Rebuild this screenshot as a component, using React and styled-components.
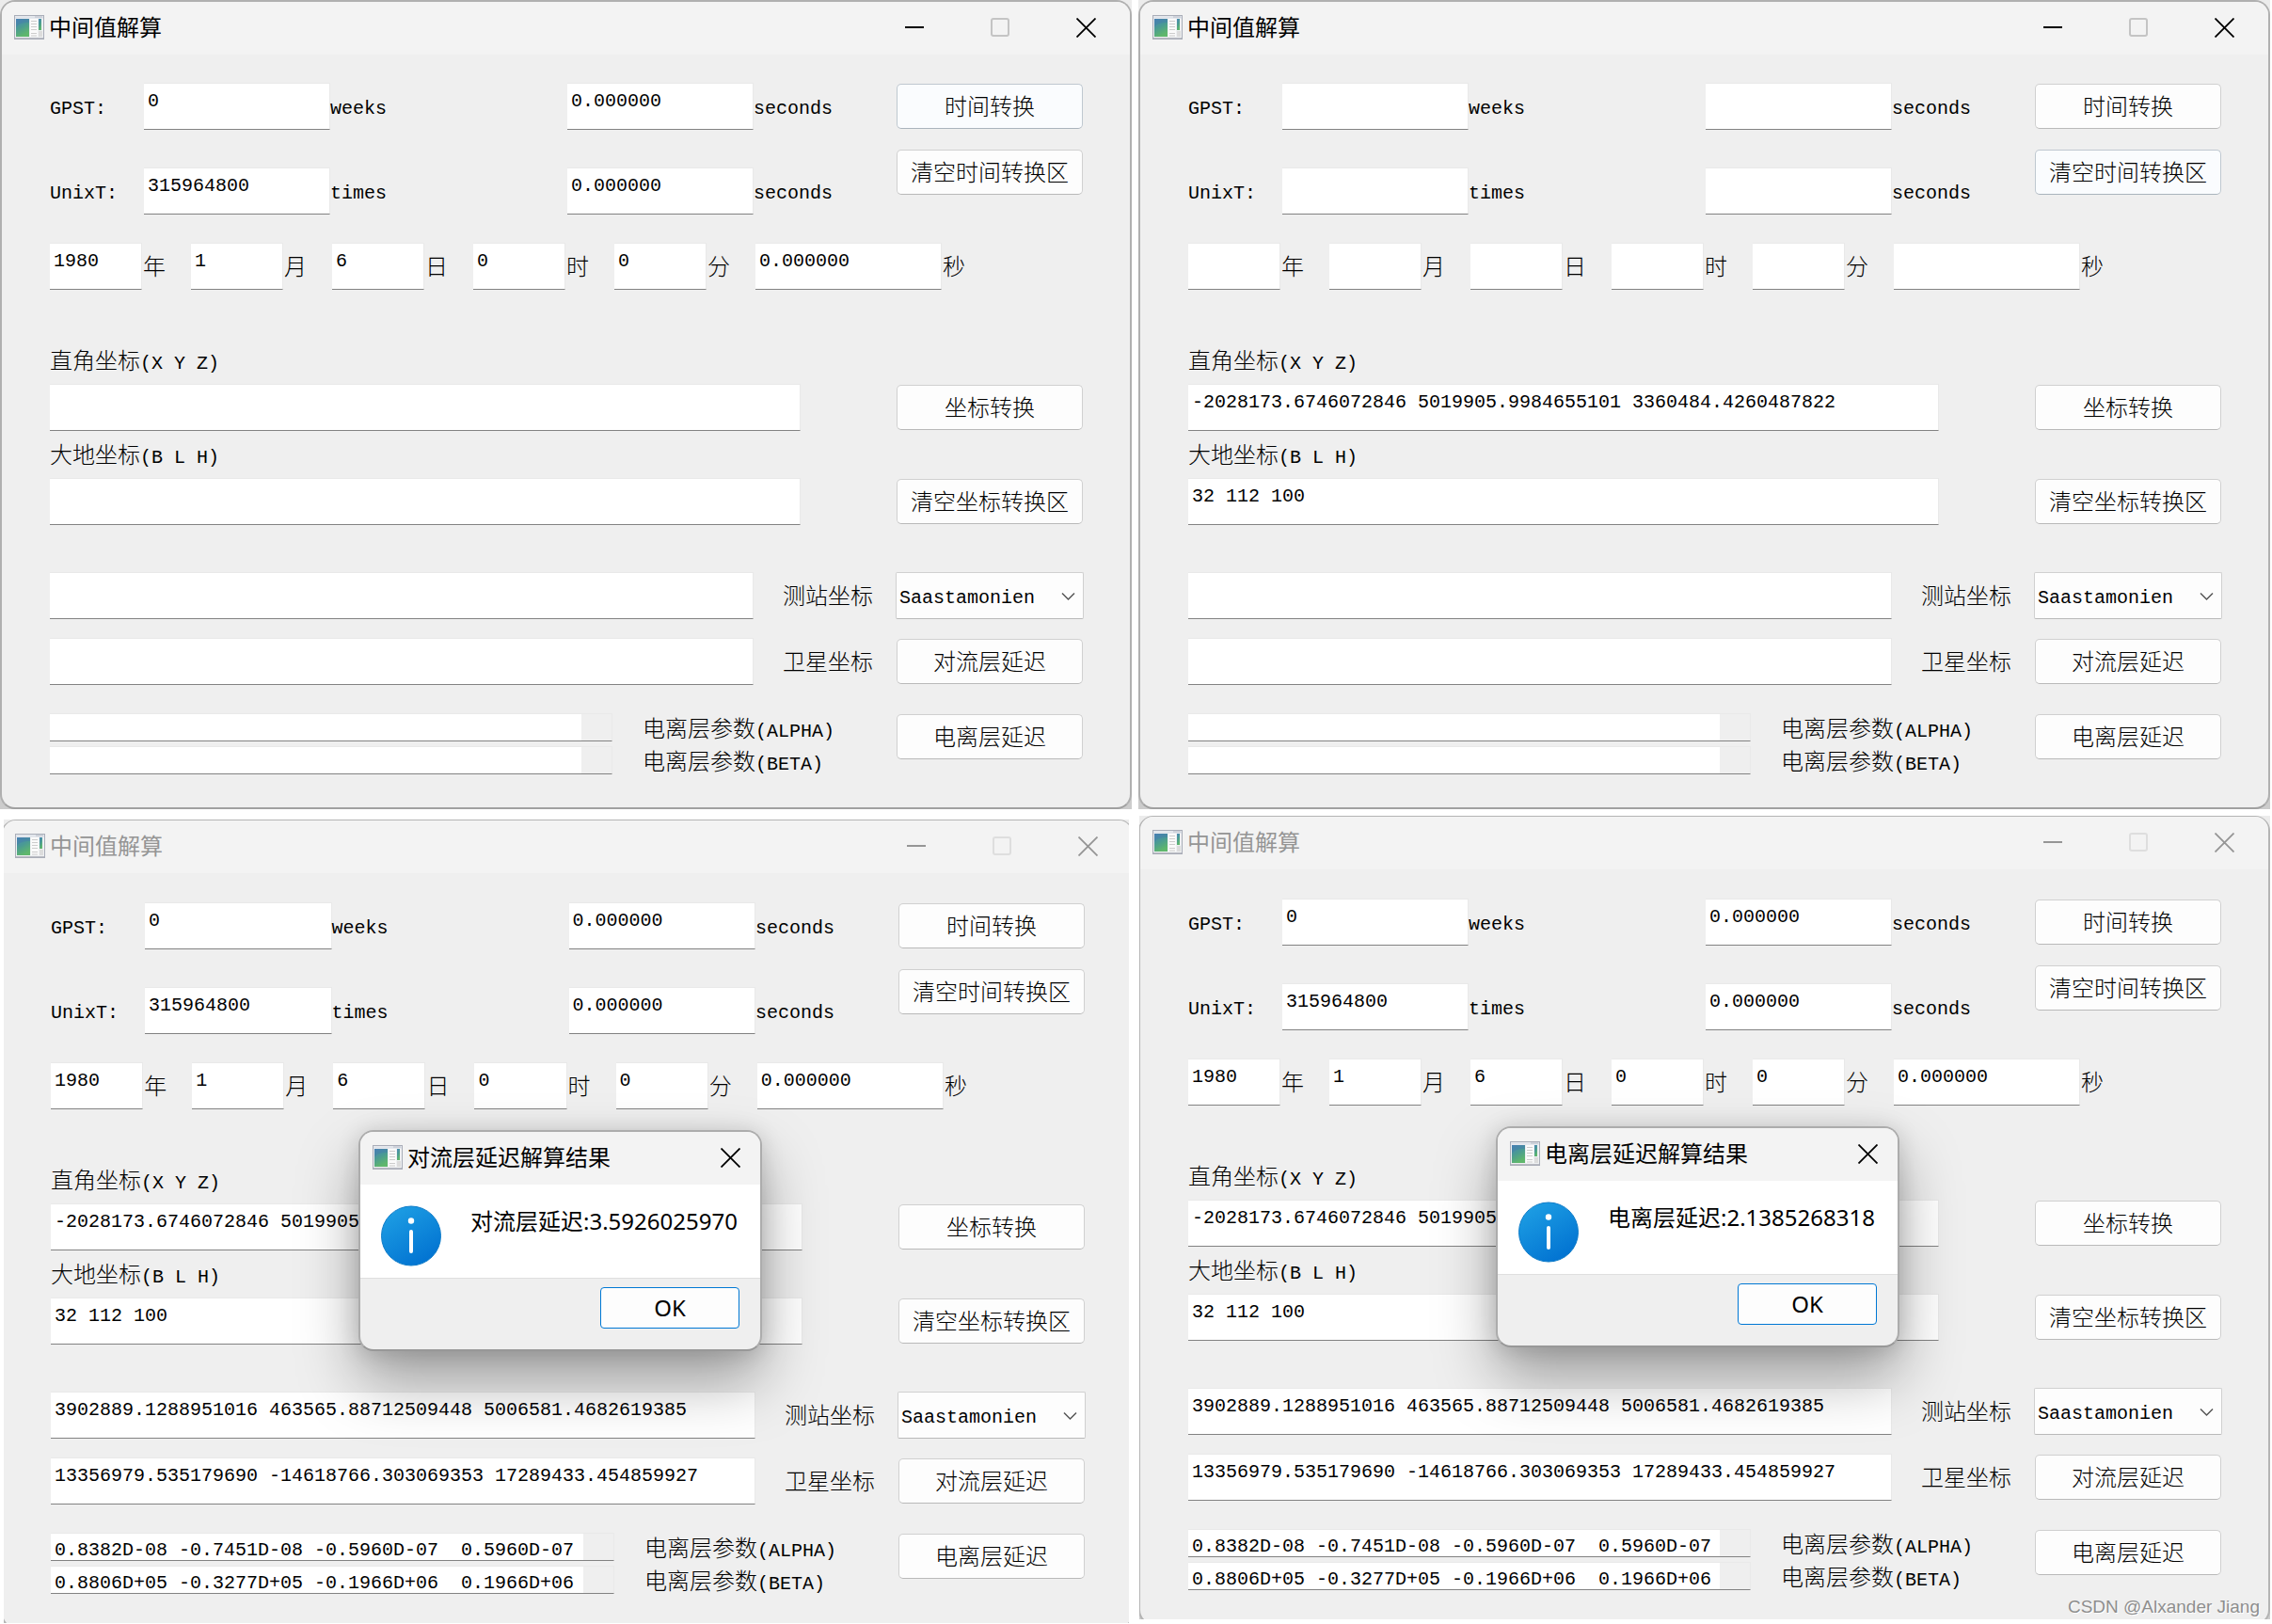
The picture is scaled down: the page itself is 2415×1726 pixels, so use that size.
import React, { useId } from "react";
import styled, { createGlobalStyle, css } from "styled-components";

const GlobalStyle = createGlobalStyle`
	* {
		box-sizing: border-box;
	}
	body {
		margin: 0;
		background: #fff;
		color: #000;
		font-family: "Liberation Mono", "Noto Sans CJK SC", monospace;
		font-size: 20px;
	}
	button, input, select {
		margin: 0;
		font: inherit;
		color: inherit;
	}
`;

const Page = styled.main`
	position: relative;
	display: grid;
	grid-template-columns: 1fr 1fr;
	column-gap: 7px;
	align-items: start;
	padding-right: 2px;
	overflow: hidden;
`;

// the two lower windows are cropped a little at their edges
const Shot = styled.div`
	overflow: hidden;
	background: linear-gradient(#ececec, #cccccc);
	margin: ${({ $margin }) => $margin || "0"};
`;

const Frame = styled.section`
	position: relative;
	margin: ${({ $margin }) => $margin || "0"};
	border: 2px solid #b0b0b0;
	border-bottom-color: #a0a0a0;
	border-radius: 16px;
	background: #efefef;
	${({ $inactive }) =>
		$inactive &&
		css`
			border-top-width: 1px;
			border-color: #b4b4b4;
		`}
`;

const TitleBar = styled.header`
	display: flex;
	align-items: center;
	height: 56px;
	padding: 0 36px 2px 13px;
	background: #f3f3f3;
	border-radius: 14px 14px 0 0;
	color: ${({ $inactive }) => ($inactive ? "#959595" : "#000")};
`;

const Title = styled.h1`
	flex: 1;
	margin: 0 0 0 5px;
	padding-bottom: 2px;
	font-family: "Noto Sans CJK SC", sans-serif;
	font-size: 24px;
	font-weight: 400;
	line-height: 30px;
`;

const CaptionButtons = styled.div`
	display: flex;
	gap: 70px;
`;

const CaptionButton = styled.button`
	display: flex;
	padding: 0;
	border: 0;
	background: none;
	color: ${({ $inactive }) => ($inactive ? "#959595" : "#000")};
	&:disabled {
		color: ${({ $inactive }) => ($inactive ? "#dedede" : "#c4c4c4")};
	}
`;

const Body = styled.form`
	padding: ${({ $inactive }) => ($inactive ? "31px" : "30px")} 50px 35px 51px;
`;

const TimeSection = styled.div`
	display: grid;
	grid-template-columns: 1fr 198px;
`;

const TimeRows = styled.div`
	display: grid;
	grid-template-columns: 100px 1fr 252px 1fr 152px;
	row-gap: 40px;
`;

const ButtonStack = styled.div`
	display: flex;
	flex-direction: column;
	gap: 22px;
	padding-top: 1px;
`;

const DateRow = styled.div`
	display: grid;
	grid-template-columns: repeat(5, 98fr 52px) 198fr 150px;
	margin-top: 30px;
`;

const CoordSection = styled.div`
	margin-top: 50px;
`;

const CoordRow = styled.div`
	display: grid;
	grid-template-columns: 1fr 198px;
	column-gap: 102px;
	align-items: center;
`;

const DelaySection = styled.div`
	display: grid;
	gap: 20px;
	margin-top: 50px;
`;

const DelayRow = styled.div`
	display: grid;
	grid-template-columns: 1fr 152px 198px;
	align-items: center;
`;

const IonoRow = styled.div`
	display: grid;
	grid-template-columns: 1fr 302px 198px;
	align-items: start;
	margin-top: 10px;
`;

const IonoStack = styled.div`
	display: grid;
	gap: 5px;
`;

const Latin = styled.label`
	height: 50px;
	padding-top: 6px;
	line-height: 44px;
	white-space: pre;
`;

const Caption = styled.label`
	display: block;
	height: ${({ $slim }) => ($slim ? 30 : 50)}px;
	padding-left: ${({ $indent }) => $indent || 0}px;
	font-family: "Noto Sans CJK SC", sans-serif;
	font-size: 24px;
	font-weight: 300;
	line-height: ${({ $slim }) => ($slim ? 30 : 48)}px;
	white-space: nowrap;
	span {
		font-family: "Liberation Mono", monospace;
		font-size: 20px;
		line-height: 20px;
	}
`;

const Field = styled.input`
	width: 100%;
	min-width: 0;
	height: 50px;
	padding: 0 0 12px 4px;
	border: 1px solid #e9e9e9;
	border-left-width: 0;
	border-bottom-color: #828282;
	border-radius: 0;
	background: #fff;
	outline: none;
`;

const SlimField = styled(Field)`
	height: 30px;
	padding: 6px 32px 0 4px;
	background: linear-gradient(to left, #efefef 32px, #fff 32px);
`;

const PushButton = styled.button`
	width: 100%;
	height: 48px;
	padding: 0 0 2px;
	border: 1px solid ${({ $hot }) => ($hot ? "#bfc8d0" : "#d0d0d0")};
	border-bottom-color: ${({ $hot }) => ($hot ? "#aab4bd" : "#b9b9b9")};
	border-radius: 5px;
	background: ${({ $hot }) => ($hot ? "#fafcfe" : "#fdfdfd")};
	font-family: "Noto Sans CJK SC", sans-serif;
	font-size: 24px;
	font-weight: 300;
	line-height: 44px;
	white-space: nowrap;
`;

const IonoButton = styled(PushButton)`
	margin-top: 1px;
`;

const Combo = styled.div`
	position: relative;
	margin: 0 -1px;
	svg {
		position: absolute;
		right: 9px;
		top: 21px;
		pointer-events: none;
	}
`;

const Select = styled.select`
	display: block;
	width: 100%;
	height: 50px;
	padding: 4px 24px 0 3px;
	border: 1px solid #d0d0d0;
	border-bottom-color: #b9b9b9;
	border-radius: 2px;
	background: #fdfdfd;
	appearance: none;
`;

const Dialog = styled.div`
	position: absolute;
	top: 329px;
	left: 378px;
	width: 429px;
	border: 2px solid #acacac;
	border-bottom-color: #989898;
	border-radius: 16px;
	background: #efefef;
	box-shadow: 0 32px 64px rgba(0, 0, 0, 0.34), 0 2px 24px rgba(0, 0, 0, 0.14);
`;

const DialogTitleBar = styled(TitleBar)`
	padding-right: 21px;
`;

const DialogBody = styled.div`
	display: flex;
	align-items: flex-start;
	gap: 31px;
	height: 100px;
	padding: 22px 0 0 22px;
	border-bottom: 1px solid #dfdfdf;
	background: #fff;
`;

const Message = styled.p`
	margin: 0;
	font-family: "Noto Sans", "Noto Sans CJK SC", sans-serif;
	font-size: 24px;
	line-height: 34px;
	white-space: nowrap;
`;

const DialogFooter = styled.div`
	display: flex;
	justify-content: flex-end;
	height: 75px;
	padding: 9px 22px 0 0;
`;

const OkButton = styled.button`
	width: 148px;
	height: 44px;
	padding: 0;
	border: 1px solid #0078d4;
	border-radius: 4px;
	background: #fdfdfd;
	font-family: "Noto Sans", sans-serif;
	font-size: 24px;
	line-height: 40px;
`;

const Watermark = styled.div`
	position: absolute;
	right: 13px;
	bottom: 5px;
	color: #8e8e8e;
	font-family: "Liberation Sans", sans-serif;
	font-size: 19px;
	line-height: 24px;
	text-shadow: 1px 1px 0 #fff;
`;

const AppIcon = () => {
	const id = useId();
	return (
		<svg width="32" height="26" viewBox="0 0 32 26" aria-hidden="true">
			<defs>
				<linearGradient id={id} x1="0" y1="0" x2="0.4" y2="1">
					<stop offset="0" stopColor="#4a86b8" />
					<stop offset="0.5" stopColor="#4a9a94" />
					<stop offset="1" stopColor="#5fb76c" />
				</linearGradient>
			</defs>
			<rect x="0.5" y="0.5" width="31" height="25" fill="#eef0f2" stroke="#a9adb8" />
			<path d="M1 2.5h30" stroke="#dfe3ea" strokeWidth="2" />
			<path d="M22 2h8" stroke="#b9bdc8" />
			<rect x="2" y="4" width="14" height="19" fill={`url(#${id})`} />
			<path d="M2 13c4-5 9-5 14-5V4H2z" fill="#4379ac" opacity="0.4" />
			<rect x="17" y="4" width="8" height="19" fill="#fafafa" />
			<path d="M18 6.5h6M18 9.5h6M18 12.5h6M18 15.5h6M18 19.5h6M18 22h6" stroke="#cccccc" />
			<rect x="26" y="4" width="3" height="12" fill={`url(#${id})`} />
			<rect x="26" y="17" width="4" height="6" fill="#dcdcdc" />
			<path d="M1 24.5h30" stroke="#b9bbc2" />
		</svg>
	);
};

const MinimizeIcon = () => (
	<svg width="21" height="21" viewBox="0 0 21 21" aria-hidden="true">
		<path d="M0 10h20" stroke="currentColor" strokeWidth="2" />
	</svg>
);

const MaximizeIcon = () => (
	<svg width="21" height="21" viewBox="0 0 21 21" aria-hidden="true">
		<rect x="1" y="1" width="18" height="18" rx="2" fill="none" stroke="currentColor" strokeWidth="2" />
	</svg>
);

const CloseIcon = () => (
	<svg width="21" height="21" viewBox="0 0 21 21" aria-hidden="true">
		<path d="M0.5 0.5l20 20M20.5 0.5l-20 20" stroke="currentColor" strokeWidth="1.8" />
	</svg>
);

const ChevronIcon = () => (
	<svg width="15" height="10" viewBox="0 0 15 10" aria-hidden="true">
		<path d="M1 1.5l6.5 6.5L14 1.5" fill="none" stroke="#555" strokeWidth="1.5" />
	</svg>
);

const InfoIcon = () => {
	const id = useId();
	return (
		<svg width="64" height="65" viewBox="0 0 64 65" aria-hidden="true">
			<defs>
				<linearGradient id={id} x1="0.2" y1="0" x2="0.8" y2="1">
					<stop offset="0" stopColor="#1e9fe4" />
					<stop offset="1" stopColor="#0070d0" />
				</linearGradient>
			</defs>
			<circle cx="32" cy="32.5" r="31.5" fill={`url(#${id})`} stroke="#0f7cc9" />
			<circle cx="32" cy="16.5" r="3.2" fill="#fff" />
			<path d="M32 28v21" stroke="#fff" strokeWidth="4" strokeLinecap="round" />
		</svg>
	);
};

const dateUnits = ["年", "月", "日", "时", "分", "秒"];

const ResultDialog = ({ title, message }) => (
	<Dialog role="dialog" aria-label={title}>
		<DialogTitleBar>
			<AppIcon />
			<Title as="h2">{title}</Title>
			<CaptionButton type="button" aria-label="关闭">
				<CloseIcon />
			</CaptionButton>
		</DialogTitleBar>
		<DialogBody>
			<InfoIcon />
			<Message>{message}</Message>
		</DialogBody>
		<DialogFooter>
			<OkButton type="button">OK</OkButton>
		</DialogFooter>
	</Dialog>
);

const SolverWindow = ({ data, inactive, hot, margin, children }) => {
	const id = useId();
	return (
		<Frame $inactive={inactive} $margin={margin}>
			<TitleBar $inactive={inactive}>
				<AppIcon />
				<Title>中间值解算</Title>
				<CaptionButtons>
					<CaptionButton type="button" $inactive={inactive} aria-label="最小化">
						<MinimizeIcon />
					</CaptionButton>
					<CaptionButton type="button" $inactive={inactive} aria-label="最大化" disabled>
						<MaximizeIcon />
					</CaptionButton>
					<CaptionButton type="button" $inactive={inactive} aria-label="关闭">
						<CloseIcon />
					</CaptionButton>
				</CaptionButtons>
			</TitleBar>

			<Body $inactive={inactive} onSubmit={(e) => e.preventDefault()}>
				<TimeSection>
					<TimeRows>
						<Latin htmlFor={`${id}weeks`}>GPST:</Latin>
						<Field id={`${id}weeks`} defaultValue={data.gpst[0]} />
						<Latin htmlFor={`${id}weeks`}>weeks</Latin>
						<Field id={`${id}gsec`} defaultValue={data.gpst[1]} />
						<Latin htmlFor={`${id}gsec`}>seconds</Latin>

						<Latin htmlFor={`${id}times`}>UnixT:</Latin>
						<Field id={`${id}times`} defaultValue={data.unix[0]} />
						<Latin htmlFor={`${id}times`}>times</Latin>
						<Field id={`${id}usec`} defaultValue={data.unix[1]} />
						<Latin htmlFor={`${id}usec`}>seconds</Latin>
					</TimeRows>
					<ButtonStack>
						<PushButton type="button" $hot={hot === "convert"}>时间转换</PushButton>
						<PushButton type="button" $hot={hot === "clear"}>清空时间转换区</PushButton>
					</ButtonStack>
				</TimeSection>

				<DateRow>
					{dateUnits.map((unit, i) => (
						<React.Fragment key={unit}>
							<Field id={`${id}d${i}`} defaultValue={data.date[i]} />
							<Caption htmlFor={`${id}d${i}`} $indent={1}>{unit}</Caption>
						</React.Fragment>
					))}
				</DateRow>

				<CoordSection>
					<Caption htmlFor={`${id}xyz`}>
						直角坐标<span>(X Y Z)</span>
					</Caption>
					<CoordRow>
						<Field id={`${id}xyz`} defaultValue={data.xyz} />
						<PushButton type="button">坐标转换</PushButton>
					</CoordRow>
					<Caption htmlFor={`${id}blh`}>
						大地坐标<span>(B L H)</span>
					</Caption>
					<CoordRow>
						<Field id={`${id}blh`} defaultValue={data.blh} />
						<PushButton type="button">清空坐标转换区</PushButton>
					</CoordRow>
				</CoordSection>

				<DelaySection>
					<DelayRow>
						<Field id={`${id}station`} defaultValue={data.station} />
						<Caption htmlFor={`${id}station`} $indent={31}>测站坐标</Caption>
						<Combo>
							<Select aria-label="对流层模型" defaultValue="Saastamonien">
								<option>Saastamonien</option>
							</Select>
							<ChevronIcon />
						</Combo>
					</DelayRow>
					<DelayRow>
						<Field id={`${id}sat`} defaultValue={data.satellite} />
						<Caption htmlFor={`${id}sat`} $indent={31}>卫星坐标</Caption>
						<PushButton type="button">对流层延迟</PushButton>
					</DelayRow>
					<IonoRow>
						<IonoStack>
							<SlimField id={`${id}alpha`} defaultValue={data.alpha} />
							<SlimField id={`${id}beta`} defaultValue={data.beta} />
						</IonoStack>
						<IonoStack>
							<Caption htmlFor={`${id}alpha`} $indent={32} $slim>
								电离层参数<span>(ALPHA)</span>
							</Caption>
							<Caption htmlFor={`${id}beta`} $indent={32} $slim>
								电离层参数<span>(BETA)</span>
							</Caption>
						</IonoStack>
						<IonoButton type="button">电离层延迟</IonoButton>
					</IonoRow>
				</DelaySection>
			</Body>
			{children}
		</Frame>
	);
};

const epoch = {
	gpst: ["0", "0.000000"],
	unix: ["315964800", "0.000000"],
	date: ["1980", "1", "6", "0", "0", "0.000000"],
};

const noTime = {
	gpst: ["", ""],
	unix: ["", ""],
	date: ["", "", "", "", "", ""],
};

const coords = {
	xyz: "-2028173.6746072846 5019905.9984655101 3360484.4260487822",
	blh: "32 112 100",
};

const delay = {
	station: "3902889.1288951016 463565.88712509448 5006581.4682619385",
	satellite: "13356979.535179690 -14618766.303069353 17289433.454859927",
	alpha: "0.8382D-08 -0.7451D-08 -0.5960D-07  0.5960D-07",
	beta: "0.8806D+05 -0.3277D+05 -0.1966D+06  0.1966D+06",
};

const App = () => {
	return (
		<>
			<GlobalStyle />
			<Page>
				<Shot>
					<SolverWindow data={epoch} hot="convert" />
				</Shot>
				<Shot>
					<SolverWindow data={{ ...noTime, ...coords }} hot="clear" />
				</Shot>
				<Shot $margin="11px 3px 0 4px">
					<SolverWindow data={{ ...epoch, ...coords, ...delay }} inactive margin="0 -5px -6px -3px">
						<ResultDialog title="对流层延迟解算结果" message="对流层延迟:3.5926025970" />
					</SolverWindow>
				</Shot>
				<Shot $margin="7px 0 0 1px">
					<SolverWindow data={{ ...epoch, ...coords, ...delay }} inactive margin="0 0 -6px -1px">
						<ResultDialog title="电离层延迟解算结果" message="电离层延迟:2.1385268318" />
					</SolverWindow>
				</Shot>
				<Watermark>CSDN @Alxander Jiang</Watermark>
			</Page>
		</>
	);
};

export default App;
